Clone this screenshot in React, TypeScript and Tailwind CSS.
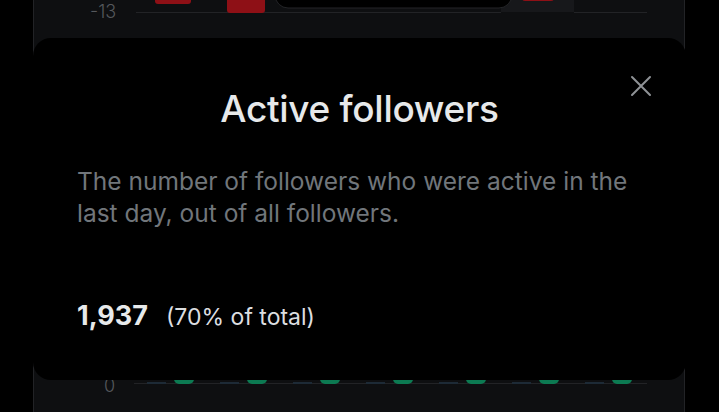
import React from "react";

const greenBars = [0, 1, 2, 3, 4, 5, 6];

function TopChart() {
  // bottom ends of the negative bars, cut off by the top of the window
  return (
    <svg width="640" height="22" viewBox="0 0 640 22" className="block">
      <rect x="467" y="-20" width="73" height="32" fill="#17181b" />
      <line x1="102" y1="12.5" x2="467" y2="12.5" stroke="#222326" />
      <line x1="540" y1="12.5" x2="613" y2="12.5" stroke="#222326" />
      <rect x="121" y="-20" width="36" height="24" rx="3" fill="#8e1016" />
      <rect x="193" y="-20" width="38" height="33" rx="3" fill="#8e1016" />
      <rect x="488" y="-20" width="32" height="21" rx="3" fill="#8e1016" />
      <rect x="241" y="-30" width="237" height="38" rx="13" fill="#000" stroke="#242528" />
    </svg>
  );
}

function BottomChart() {
  return (
    <svg width="640" height="14" viewBox="0 0 640 14" className="block">
      <line x1="100" y1="5.5" x2="613" y2="5.5" stroke="#222326" />
      {greenBars.map((i) => (
        <g key={i}>
          <rect x={113 + i * 73} y="4" width="19" height="2" fill="#1d2a36" />
          <rect x={140 + i * 73} y="-10" width="20" height="16" rx="5" fill="#0c7a52" />
        </g>
      ))}
    </svg>
  );
}

export default function App() {
  return (
    <div
      className="relative w-[719px] h-[412px] bg-black overflow-hidden"
      style={{ fontFamily: "Inter, 'Noto Sans', sans-serif" }}
    >
      {/* chart card behind the sheet */}
      <div className="ml-[33px] w-[652px] h-full bg-[#0e0f11] border-x border-[#222326] flex flex-col justify-between">
        <div className="flex items-start">
          <span className="w-[85px] shrink-0 pl-[56px] text-[18px] leading-[26px] -mt-[1px] text-[#55585c] font-light">-13</span>
          <div className="-ml-[85px]">
            <TopChart />
          </div>
        </div>
        <div className="flex items-start h-[32px]">
          <span className="w-[85px] shrink-0 pl-[70px] text-[18px] leading-[22px] mt-[-5px] text-[#55585c] font-light">0</span>
          <div className="-ml-[85px] mt-[-2px]">
            <BottomChart />
          </div>
        </div>
      </div>

      {/* info sheet */}
      <div className="absolute left-[33px] top-[38px] w-[653px] h-[342px] bg-black rounded-[18px] px-[44px] flex flex-col">
        <div className="relative h-[97px] flex items-end justify-center">
          <h2 className="text-[37px] leading-[44px] font-medium text-[#e7e9ea] tracking-[-0.3px] pb-[4px]">
            Active followers
          </h2>
          <button className="absolute right-[-10px] top-[37px] w-[22px] h-[22px] flex items-center justify-center text-[#8f9296]">
            <svg width="22" height="22" viewBox="0 0 22 22" fill="none" stroke="currentColor" strokeWidth="2" strokeLinecap="round">
              <path d="M2 2 L20 20 M20 2 L2 20" />
            </svg>
          </button>
        </div>
        <p className="mt-[30px] text-[24.5px] leading-[32px] text-[#71767b]">
          The number of followers who were active in the last day, out of all followers.
        </p>
        <div className="mt-[67px] flex items-baseline gap-[18px] text-[#e7e9ea]">
          <span className="text-[27px] font-bold">1,937</span>
          <span className="text-[23px] text-[#dcdee0]">(70% of total)</span>
        </div>
      </div>
    </div>
  );
}
